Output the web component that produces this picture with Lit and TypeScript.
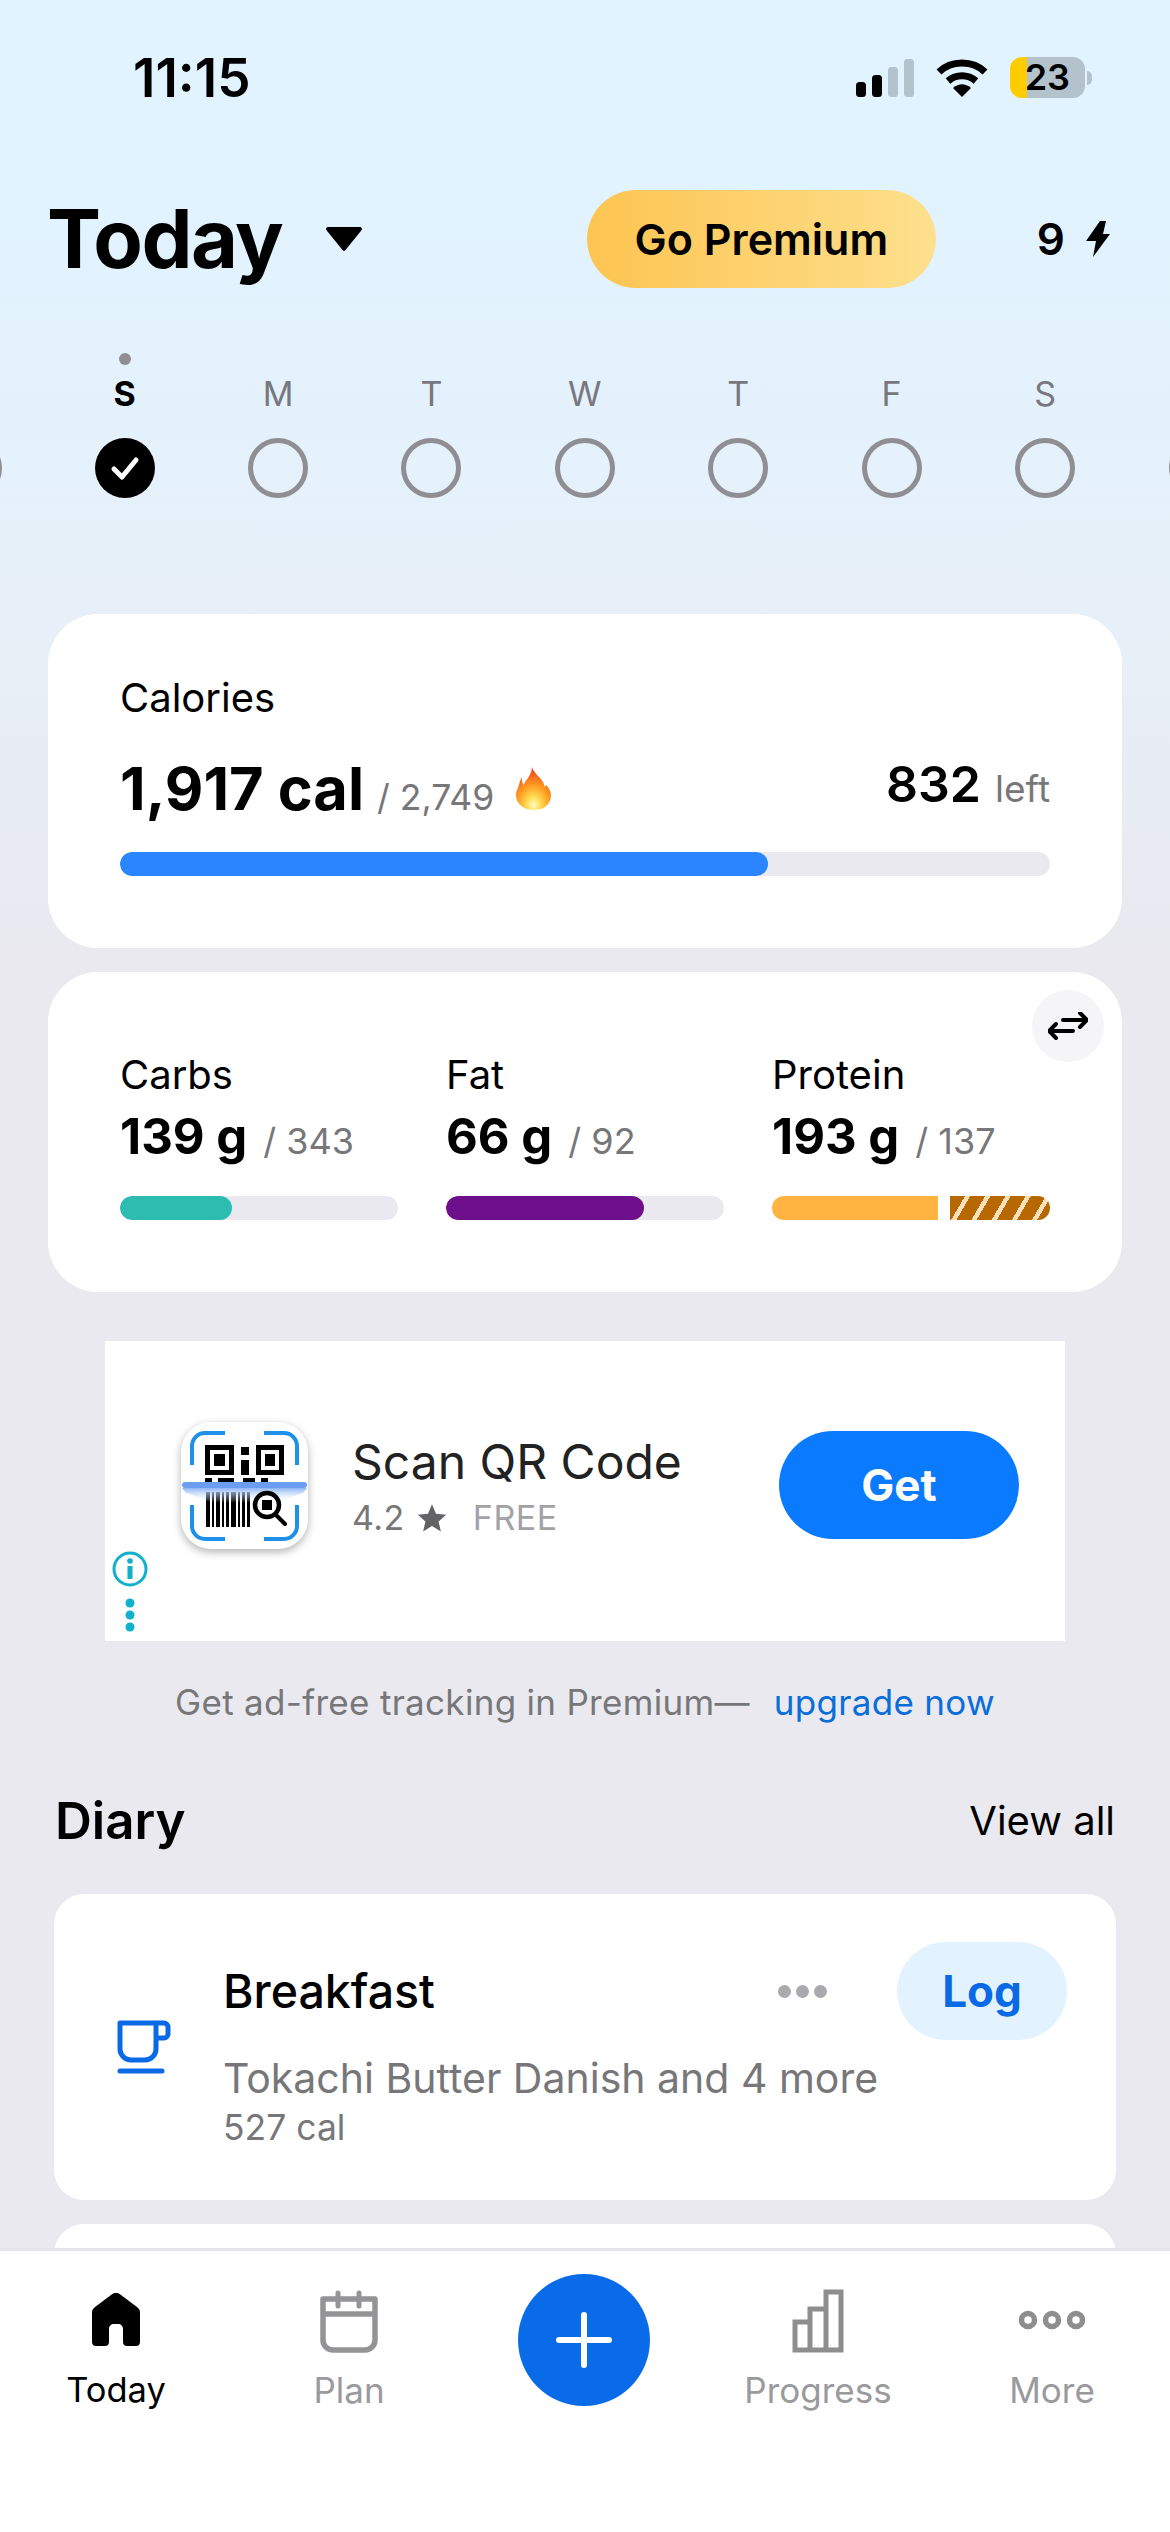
import { LitElement, html, css, svg } from 'lit';
import { customElement } from 'lit/decorators.js';

const DAYS = ['S', 'M', 'T', 'W', 'T', 'F', 'S'];

const BARCODE = [
  [25, 4], [31, 2], [35, 4], [41, 2], [45, 3], [50, 5], [57, 2], [61, 3], [66, 3],
];

const qrIcon = svg`
  <g fill="none" stroke="#1e90ea" stroke-width="4" stroke-linecap="butt">
    <path d="M44 11H24a13 13 0 0 0-13 13v19" /><path d="M83 11h20a13 13 0 0 1 13 13v19" />
    <path d="M11 83v21a13 13 0 0 0 13 13h20" /><path d="M116 83v21a13 13 0 0 1-13 13H83" />
  </g>
  <g fill="#000">
    <path fill-rule="evenodd" d="M24 23h29v30H24zM29 28v20h19V28zM33 32h11v12H33z" />
    <path fill-rule="evenodd" d="M75 23h28v30H75zM80 28v20h18V28zM84 32h10v12H84z" />
    <rect x="60" y="25" width="8" height="8" /><rect x="60" y="38" width="8" height="15" />
    <rect x="24" y="56" width="7" height="5" /><rect x="37" y="56" width="16" height="5" /><rect x="62" y="56" width="12" height="5" /><rect x="80" y="56" width="7" height="5" />
    ${BARCODE.map(([x, w]) => svg`<rect x=${x} y="70" width=${w} height="35" />`)}
  </g>
  <path d="M1 66h125l-4 5-28 10H33L5 71z" fill="url(#scanGlow)" />
  <rect x="1" y="60" width="125" height="6" rx="3" fill="#6d9df0" />
  <circle cx="86" cy="83" r="12" fill="#fff" stroke="#000" stroke-width="4.5" />
  <rect x="81" y="78" width="10" height="10" fill="#000" />
  <path d="M95 93l9 9" stroke="#000" stroke-width="4" stroke-linecap="round" />
`;

@customElement('app-root')
export class AppRoot extends LitElement {
  static styles = css`
    :host {
      display: block;
      width: 1170px;
      height: 2532px;
      overflow: hidden;
      font-family: Inter, 'Liberation Sans', sans-serif;
      color: #000;
    }
    .screen {
      height: 2532px;
      display: flex;
      flex-direction: column;
      background: linear-gradient(180deg, #e1f3ff 0%, #e1f3ff 200px, #e7f0f9 600px, #e9e9ef 960px);
    }
    .main {
      flex: 1;
      min-height: 0;
      overflow: hidden;
    }
    .status {
      height: 154px;
      box-sizing: border-box;
      padding: 51px 78px 0 133px;
      display: flex;
      justify-content: space-between;
      align-items: flex-start;
    }
    .time {
      font-size: 53px;
      font-weight: 600;
      line-height: 54px;
    }
    .status-icons {
      display: flex;
      align-items: center;
      gap: 22px;
      padding-top: 6px;
    }
    .battery {
      width: 75px;
      height: 41px;
      border-radius: 12px;
      background: linear-gradient(90deg, #ffcc00 17px, #b4c2cc 17px);
      font-size: 36px;
      font-weight: 600;
      line-height: 41px;
      text-align: right;
      padding-right: 15px;
      box-sizing: border-box;
    }
    .battery-wrap {
      display: flex;
      align-items: center;
      gap: 2px;
    }
    .nub {
      width: 5px;
      height: 14px;
      border-radius: 0 7px 7px 0;
      background: #b4c2cc;
    }
    .header {
      height: 98px;
      margin-top: 36px;
      padding: 0 60px 0 47px;
      display: flex;
      align-items: center;
    }
    .title {
      font-size: 81px;
      font-weight: 700;
      letter-spacing: -1.5px;
      line-height: 98px;
    }
    .caret {
      margin-left: 44px;
    }
    .premium {
      margin-left: auto;
      width: 349px;
      height: 98px;
      border-radius: 49px;
      background: linear-gradient(90deg, #fdc451, #fde08d);
      font-size: 43px;
      font-weight: 600;
      display: flex;
      align-items: center;
      justify-content: center;
    }
    .streak {
      margin-left: 101px;
      display: flex;
      align-items: center;
      gap: 21px;
      font-size: 44px;
      font-weight: 600;
    }
    .week {
      margin-top: 84px;
      position: relative;
      display: grid;
      grid-template-columns: repeat(7, 153.4px);
      padding-left: 48px;
    }
    .day {
      position: relative;
      display: flex;
      flex-direction: column;
      align-items: center;
      gap: 22px;
      color: #77777d;
      font-size: 34px;
      line-height: 44px;
    }
    .day.active {
      color: #000;
      font-weight: 700;
    }
    .today-dot {
      position: absolute;
      top: -19px;
      width: 12px;
      height: 12px;
      border-radius: 50%;
      background: #8e8e93;
    }
    .ring {
      width: 60px;
      height: 60px;
      box-sizing: border-box;
      border: 5px solid #8e8e93;
      border-radius: 50%;
    }
    .check {
      width: 60px;
      height: 60px;
      display: block;
    }
    .edge {
      position: absolute;
      bottom: 0;
      width: 60px;
      height: 60px;
      box-sizing: border-box;
      border: 5px solid #8e8e93;
      border-radius: 50%;
    }
    .edge.left {
      left: -58px;
    }
    .edge.right {
      right: -59px;
    }
    .card {
      margin: 0 48px;
      background: #fff;
      border-radius: 50px;
      box-sizing: border-box;
    }
    .calories {
      margin-top: 116px;
      height: 334px;
      padding: 0 72px;
      display: flex;
      flex-direction: column;
    }
    .label {
      font-size: 40px;
      line-height: 48px;
    }
    .calories .label {
      margin-top: 60px;
    }
    .cal-row {
      margin-top: 30px;
      height: 80px;
      display: flex;
      align-items: flex-start;
      justify-content: space-between;
    }
    .cal-side {
      display: flex;
      align-items: baseline;
    }
    .cal-side.right {
      margin-top: 2px;
    }
    .cal-big {
      font-size: 59.5px;
      font-weight: 700;
    }
    .of {
      color: #77777a;
      font-size: 35.5px;
      margin-left: 13px;
    }
    .flame {
      margin-left: 22px;
      align-self: center;
    }
    .left-num {
      font-size: 50px;
      font-weight: 600;
    }
    .left-word {
      margin-left: 14px;
      color: #77777a;
      font-size: 37px;
    }
    .track {
      position: relative;
      height: 24px;
      border-radius: 12px;
      overflow: hidden;
      background: #e9e9ef;
    }
    .fill {
      height: 100%;
      border-radius: 12px;
    }
    .calories .track {
      margin-top: 20px;
    }
    .macros {
      margin-top: 24px;
      height: 320px;
      position: relative;
      padding: 79px 72px 0;
      display: grid;
      grid-template-columns: repeat(3, 278px);
      column-gap: 48px;
    }
    .swap {
      position: absolute;
      right: 18px;
      top: 18px;
      width: 72px;
      height: 72px;
      border-radius: 50%;
      background: #f5f5f8;
      display: flex;
      align-items: center;
      justify-content: center;
    }
    .macro-value {
      margin-top: 8px;
      height: 61px;
      display: flex;
      align-items: baseline;
    }
    .macro-big {
      font-size: 49px;
      font-weight: 700;
    }
    .macro-value .of {
      font-size: 36px;
      margin-left: 16px;
    }
    .macro .track {
      margin-top: 28px;
    }
    .split {
      display: flex;
      height: 24px;
      gap: 12px;
      margin-top: 28px;
    }
    .split .solid {
      width: 166px;
      background: #ffb341;
      border-radius: 12px 0 0 12px;
    }
    .split .over {
      flex: 1;
      border-radius: 0 12px 12px 0;
      background: repeating-linear-gradient(120deg, #b86800 0 13px, #ffe0bc 13px 17.5px);
    }
    .ad {
      margin: 49px 105px 0;
      height: 300px;
      box-sizing: border-box;
      position: relative;
      background: #fff;
      display: flex;
      align-items: center;
      padding: 0 46px 12px 76px;
    }
    .ad-icon {
      width: 127px;
      height: 127px;
      border-radius: 30px;
      box-shadow: 0 3px 8px rgba(0, 0, 0, 0.3);
      background: #fff;
      flex: none;
    }
    .ad-text {
      margin-left: 44px;
      flex: 1;
    }
    .ad-name {
      font-size: 48px;
      color: #222;
      line-height: 60px;
    }
    .ad-meta {
      display: flex;
      align-items: center;
      margin-top: 6px;
      font-size: 34px;
      line-height: 40px;
      color: #77777a;
      letter-spacing: 0.5px;
    }
    .ad-free {
      margin-left: 26px;
      color: #a2a2a6;
    }
    .ad-star {
      margin-left: 12px;
    }
    .get {
      width: 240px;
      height: 108px;
      border-radius: 54px;
      background: #0a7aff;
      color: #fff;
      font-size: 44px;
      font-weight: 700;
      display: flex;
      align-items: center;
      justify-content: center;
    }
    .ad-info {
      position: absolute;
      left: 7px;
      bottom: 8px;
      display: flex;
    }
    .upsell {
      margin-top: 37px;
      height: 48px;
      text-align: center;
      font-size: 35px;
      line-height: 48px;
      color: #77777a;
      letter-spacing: 0.3px;
    }
    .upsell a {
      margin-left: 14px;
      color: #0a6ed8;
    }
    .diary-head {
      margin-top: 61px;
      padding: 0 55px;
      display: flex;
      justify-content: space-between;
      align-items: center;
      height: 66px;
    }
    .diary-title {
      font-size: 51px;
      font-weight: 600;
    }
    .view-all {
      font-size: 40px;
    }
    .meal {
      margin: 41px 54px 0;
      height: 306px;
      background: #fff;
      border-radius: 30px;
      box-sizing: border-box;
      padding: 48px 49px 0 62px;
      display: flex;
    }
    .meal-icon {
      width: 107px;
      flex: none;
      padding-top: 77px;
    }
    .meal-body {
      flex: 1;
    }
    .meal-top {
      display: flex;
      align-items: center;
      height: 98px;
    }
    .meal-name {
      font-size: 46.5px;
      font-weight: 500;
      flex: 1;
    }
    .more-dots {
      display: flex;
      gap: 5px;
      margin-right: 70px;
    }
    .more-dots i {
      width: 13px;
      height: 13px;
      border-radius: 50%;
      background: #aaaaae;
    }
    .log {
      width: 170px;
      height: 98px;
      border-radius: 49px;
      background: #e2f3ff;
      color: #0a6ae6;
      font-size: 44px;
      font-weight: 700;
      display: flex;
      align-items: center;
      justify-content: center;
    }
    .meal-desc {
      color: #77777a;
      font-size: 41px;
      line-height: 50px;
      margin-top: 13px;
    }
    .meal-cal {
      color: #77777a;
      font-size: 35.5px;
      line-height: 50px;
    }
    .meal.next {
      margin-top: 24px;
      padding: 0;
    }
    .tabbar {
      height: 284px;
      flex: none;
      box-sizing: border-box;
      background: #fff;
      border-top: 3px solid #e4e4e8;
      display: grid;
      grid-template-columns: 232px 234px 236px 232px 236px;
      padding-top: 38px;
      position: relative;
    }
    .tab {
      display: flex;
      flex-direction: column;
      align-items: center;
      color: #9a9a9e;
      font-size: 35px;
    }
    .tab.on {
      color: #000;
      font-size: 34.5px;
    }
    .tab svg {
      display: block;
      height: 64px;
    }
    .tab span {
      margin-top: 15px;
      line-height: 44px;
    }
    .plus {
      width: 132px;
      height: 132px;
      border-radius: 50%;
      background: #0a6be8;
      justify-self: center;
      margin-top: -15px;
      display: flex;
      align-items: center;
      justify-content: center;
    }
  `;

  private renderDay(d: string, i: number) {
    return html`
      <div class="day ${i === 0 ? 'active' : ''}">
        ${i === 0 ? html`<div class="today-dot"></div>` : ''}
        ${d}
        ${i === 0
          ? html`<svg class="check" viewBox="0 0 60 60">
              <circle cx="30" cy="30" r="30" fill="#000" />
              <path d="M19 31l8 8 14-17" fill="none" stroke="#fff" stroke-width="5" stroke-linecap="round" stroke-linejoin="round" />
            </svg>`
          : html`<div class="ring"></div>`}
      </div>
    `;
  }

  private renderStatus() {
    return html`
      <div class="status">
        <div class="time">11:15</div>
        <div class="status-icons">
          <svg width="58" height="38" viewBox="0 0 58 38">
            <rect x="0" y="23" width="10" height="15" rx="3.5" fill="#000" />
            <rect x="16" y="16" width="10" height="22" rx="3.5" fill="#000" />
            <rect x="32" y="8" width="10" height="30" rx="3.5" fill="#b4c2cc" />
            <rect x="48" y="0" width="10" height="38" rx="3.5" fill="#b4c2cc" />
          </svg>
          <svg width="52" height="38" viewBox="0 0 52 38">
            <path d="M3 13C15 1 37 1 49 13" fill="none" stroke="#000" stroke-width="7" />
            <path d="M12 22c8-7 20-7 28 0" fill="none" stroke="#000" stroke-width="7" />
            <path d="M17 29c6-5 12-5 18 0l-9 9z" fill="#000" />
          </svg>
          <div class="battery-wrap">
            <div class="battery">23</div>
            <div class="nub"></div>
          </div>
        </div>
      </div>
    `;
  }

  private renderAd() {
    return html`
      <div class="ad">
        <svg class="ad-icon" viewBox="0 0 127 127">
          <defs>
            <linearGradient id="scanGlow" x1="0" y1="0" x2="0" y2="1">
              <stop offset="0" stop-color="#8db4f5" />
              <stop offset="1" stop-color="#ffffff" stop-opacity="0" />
            </linearGradient>
          </defs>
          ${qrIcon}
        </svg>
        <div class="ad-text">
          <div class="ad-name">Scan QR Code</div>
          <div class="ad-meta">
            4.2
            <svg class="ad-star" width="30" height="30" viewBox="0 0 24 24"><path d="M12 1l3.2 7.6 8.2.7-6.2 5.4 1.9 8L12 18.4 4.900 22.700l1.900-8L.6 9.300l8.200-.7z" fill="#636366" /></svg>
            <span class="ad-free">FREE</span>
          </div>
        </div>
        <div class="get">Get</div>
        <svg class="ad-info" width="36" height="82" viewBox="0 0 36 82">
          <circle cx="18" cy="18" r="16" fill="none" stroke="#0fb0cc" stroke-width="3" />
          <circle cx="18" cy="10" r="2.800" fill="#0fb0cc" />
          <rect x="15.500" y="15" width="5" height="13" fill="#0fb0cc" />
          <circle cx="18" cy="52" r="4.500" fill="#0fb0cc" />
          <circle cx="18" cy="64" r="4.500" fill="#0fb0cc" />
          <circle cx="18" cy="76" r="4.500" fill="#0fb0cc" />
        </svg>
      </div>
    `;
  }

  private renderTabs() {
    return html`
      <div class="tabbar">
        <div class="tab on">
          <svg width="48" viewBox="0 0 48 64">
            <path d="M24 4c1.500 0 3 .5 4 1.300L45 18c2 1.500 3 3 3 5.500V53c0 2.500-1.500 4-4 4H35c-2.500 0-4-1.500-4-4V40c0-3-2-5-5-5h-4c-3 0-5 2-5 5v13c0 2.500-1.500 4-4 4H4c-2.500 0-4-1.500-4-4V23.500C0 21 1 19.500 3 18L20 5.300C21 4.500 22.500 4 24 4z" fill="#000" />
          </svg>
          <span>Today</span>
        </div>
        <div class="tab">
          <svg width="58" viewBox="0 0 58 64" fill="none" stroke="#949497" stroke-width="5.500">
            <path d="M3 10h52v41a10 10 0 0 1-10 10H13A10 10 0 0 1 3 51z" stroke-linejoin="round" />
            <path d="M3 25h52" />
            <path d="M18 4v13M39 4v13" stroke-width="5" stroke-linecap="round" />
          </svg>
          <span>Plan</span>
        </div>
        <div class="plus">
          <svg width="56" height="56" viewBox="0 0 56 56"><path d="M28 3v50M3 28h50" stroke="#fff" stroke-width="6" stroke-linecap="round" /></svg>
        </div>
        <div class="tab">
          <svg width="52" viewBox="0 0 52 64" fill="none" stroke="#8e8e8e" stroke-width="5">
            <path d="M3 61V33h15v28zM18 61V20h16v41zM34 61V3h15v58zM3 61h46" />
          </svg>
          <span>Progress</span>
        </div>
        <div class="tab">
          <svg width="66" viewBox="0 0 66 64" fill="none" stroke="#8e8e8e" stroke-width="5.500">
            <circle cx="9" cy="31" r="6.500" /><circle cx="33" cy="31" r="6.500" /><circle cx="57" cy="31" r="6.500" />
          </svg>
          <span>More</span>
        </div>
      </div>
    `;
  }

  render() {
    return html`
      <div class="screen">
        <div class="main">
          ${this.renderStatus()}
          <div class="header">
            <div class="title">Today</div>
            <svg class="caret" width="36" height="26" viewBox="0 0 36 26"><path d="M2 1h32a2 2 0 0 1 1.500 3.200L19.500 24a2 2 0 0 1-3 0L.5 4.200A2 2 0 0 1 2 1z" fill="#000" /></svg>
            <div class="premium">Go Premium</div>
            <div class="streak">
              9
              <svg width="24" height="36" viewBox="0 0 24 36"><path d="M14 0h6l-3 13h7L7 36l3-16H0z" fill="#000" /></svg>
            </div>
          </div>
          <div class="week">
            <div class="edge left"></div>
            ${DAYS.map((d, i) => this.renderDay(d, i))}
            <div class="edge right"></div>
          </div>

          <div class="card calories">
            <div class="label">Calories</div>
            <div class="cal-row">
              <div class="cal-side">
                <span class="cal-big">1,917 cal</span>
                <span class="of">/ 2,749</span>
                <svg class="flame" width="35" height="43" viewBox="0 0 35 43">
                  <defs>
                    <radialGradient id="fire" cx="0.5" cy="0.88" r="0.85">
                      <stop offset="0" stop-color="#fffbd0" />
                      <stop offset="0.2" stop-color="#ffe15a" />
                      <stop offset="0.55" stop-color="#ff9a1f" />
                      <stop offset="1" stop-color="#ef3f1b" />
                    </radialGradient>
                  </defs>
                  <path d="M16 0c1 5 7 9 11 15 1 2 1.500 4 1.500 5 1-1 1.500-2 2-2 2 3 4.500 6 4.500 10 0 9-7 15-17 15S0 37 0 28c0-4 2-7 3-10 .5-3 1.500-6 3-8-.5 3 0 5 1.500 8 2-5 8-9 8.500-18z" fill="url(#fire)" />
                </svg>
              </div>
              <div class="cal-side right">
                <span class="left-num">832</span>
                <span class="left-word">left</span>
              </div>
            </div>
            <div class="track"><div class="fill" style="width:${(648 / 930) * 100}%;background:#2b85ff"></div></div>
          </div>

          <div class="card macros">
            <div class="swap">
              <svg width="40" height="28" viewBox="0 0 40 28" fill="none" stroke="#000" stroke-width="4" stroke-linecap="round" stroke-linejoin="round">
                <path d="M15 8h24M32 1l7 7-7 7" /><path d="M25 19H1M8 12l-7 7 7 7" />
              </svg>
            </div>
            <div class="macro">
              <div class="label">Carbs</div>
              <div class="macro-value"><span class="macro-big">139 g</span><span class="of">/ 343</span></div>
              <div class="track"><div class="fill" style="width:${(112 / 278) * 100}%;background:#2cbcb0"></div></div>
            </div>
            <div class="macro">
              <div class="label">Fat</div>
              <div class="macro-value"><span class="macro-big">66 g</span><span class="of">/ 92</span></div>
              <div class="track"><div class="fill" style="width:${(198 / 278) * 100}%;background:#6e0f8c"></div></div>
            </div>
            <div class="macro">
              <div class="label">Protein</div>
              <div class="macro-value"><span class="macro-big">193 g</span><span class="of">/ 137</span></div>
              <div class="split"><div class="solid"></div><div class="over"></div></div>
            </div>
          </div>

          ${this.renderAd()}

          <div class="upsell">Get ad-free tracking in Premium— <a>upgrade now</a></div>

          <div class="diary-head">
            <div class="diary-title">Diary</div>
            <div class="view-all">View all</div>
          </div>

          <div class="meal">
            <div class="meal-icon">
              <svg width="56" height="56" viewBox="0 0 56 56" fill="none" stroke="#0a6ae6" stroke-width="5">
                <path d="M4 4h36v26a11 11 0 0 1-11 11H15A11 11 0 0 1 4 30z" stroke-linejoin="round" />
                <path d="M40 4h8a4 4 0 0 1 4 4v7a4 4 0 0 1-4 4h-8" />
                <path d="M4 52h42" stroke-linecap="round" />
              </svg>
            </div>
            <div class="meal-body">
              <div class="meal-top">
                <div class="meal-name">Breakfast</div>
                <div class="more-dots"><i></i><i></i><i></i></div>
                <div class="log">Log</div>
              </div>
              <div class="meal-desc">Tokachi Butter Danish and 4 more</div>
              <div class="meal-cal">527 cal</div>
            </div>
          </div>
          <div class="meal next"></div>
        </div>
        ${this.renderTabs()}
      </div>
    `;
  }
}
